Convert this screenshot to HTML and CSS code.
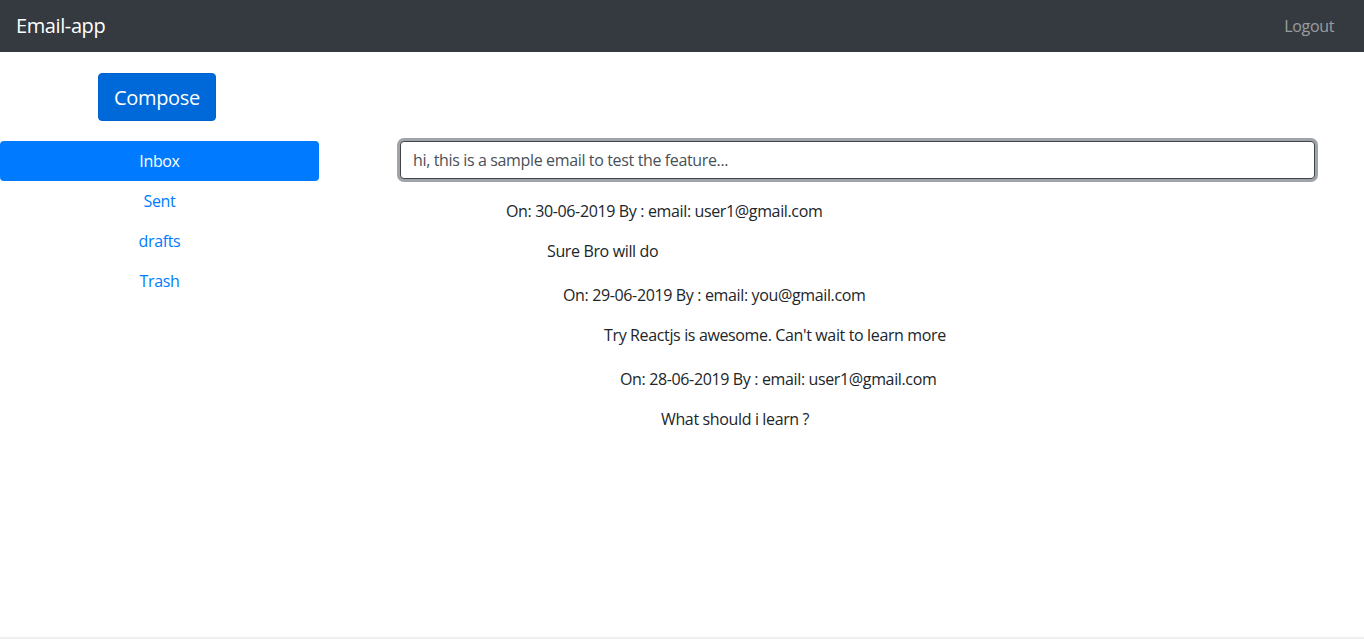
FILE: index.html
```html
<!DOCTYPE html>
<html lang="en">
<head>
<meta charset="utf-8">
<title>Email-app</title>
<link rel="stylesheet" href="styles.css">
</head>
<body>
<div class="page">
  <nav class="navbar">
    <span class="brand">Email-app</span>
    <a class="logout" href="#">Logout</a>
  </nav>
  <div class="main">
    <aside class="sidebar">
      <button class="compose" type="button">Compose</button>
      <ul class="pills">
        <li><a class="pill active" href="#">Inbox</a></li>
        <li><a class="pill" href="#">Sent</a></li>
        <li><a class="pill" href="#">drafts</a></li>
        <li><a class="pill" href="#">Trash</a></li>
      </ul>
    </aside>
    <section class="content">
      <input class="search" type="text" value="hi, this is a sample email to test the feature...">
      <div class="thread t1">
        <div class="mail-head">On: 30-06-2019 By : email: user1@gmail.com</div>
        <div class="mail-body">Sure Bro will do</div>
        <div class="thread t2">
          <div class="mail-head">On: 29-06-2019 By : email: you@gmail.com</div>
          <div class="mail-body">Try Reactjs is awesome. Can't wait to learn more</div>
          <div class="thread t3">
            <div class="mail-head">On: 28-06-2019 By : email: user1@gmail.com</div>
            <div class="mail-body">What should i learn ?</div>
          </div>
        </div>
      </div>
    </section>
  </div>
  <div class="bottom-line"></div>
</div>
</body>
</html>
```

FILE: styles.css
```css
* { box-sizing: border-box; }
html, body { margin: 0; padding: 0; }
body {
  font-family: "Open Sans", "Noto Sans", sans-serif;
  font-size: 16px;
  line-height: 24px;
  letter-spacing: -0.36px;
  color: #212529;
  background: #fff;
}
.page {
  height: 100vh;
  display: flex;
  flex-direction: column;
}
.navbar {
  height: 52px;
  background: #343a40;
  display: flex;
  align-items: center;
  justify-content: space-between;
  padding: 0 30px 0 16px;
  flex-shrink: 0;
}
.brand {
  color: #fff;
  font-size: 20px;
  line-height: 30px;
  letter-spacing: -0.4px;
}
.logout {
  color: rgba(255, 255, 255, 0.5);
  text-decoration: none;
  font-size: 16px;
}
.main {
  flex: 1;
  display: flex;
}
.sidebar {
  width: 319px;
  flex-shrink: 0;
  display: flex;
  flex-direction: column;
}
.compose {
  margin: 21px 0 0 98px;
  width: 118px;
  height: 48px;
  padding: 1px 0 0;
  border: 1px solid #0062cc;
  border-radius: 4px;
  background: #0069d9;
  color: #fff;
  font-family: inherit;
  font-size: 20px;
  line-height: 30px;
  letter-spacing: -0.33px;
}
.pills {
  list-style: none;
  margin: 20px 0 0;
  padding: 0;
}
.pill {
  display: block;
  padding: 8px 16px;
  text-align: center;
  color: #007bff;
  text-decoration: none;
  border-radius: 4px;
  line-height: 24px;
}
.pill.active {
  background: #007bff;
  color: #fff;
}
.content {
  margin-left: 81px;
  width: 915px;
}
.search {
  display: block;
  margin-top: 89px;
  width: 915px;
  height: 38px;
  padding: 6px 12px;
  border: 1px solid #3e444a;
  border-radius: 4px;
  box-shadow: 0 0 0 3px #a0a4a8;
  font-family: inherit;
  font-size: 16px;
  letter-spacing: -0.36px;
  color: #495057;
  outline: none;
}
.t1 { margin: 20px 0 0 106px; }
.t2 { margin-top: 20px; margin-left: 57px; }
.t3 { margin-top: 20px; margin-left: 57px; }
.mail-head { line-height: 24px; }
.mail-body { margin-top: 16px; padding-left: 41px; line-height: 24px; }
.bottom-line {
  height: 2px;
  background: #efefef;
  flex-shrink: 0;
}
```
